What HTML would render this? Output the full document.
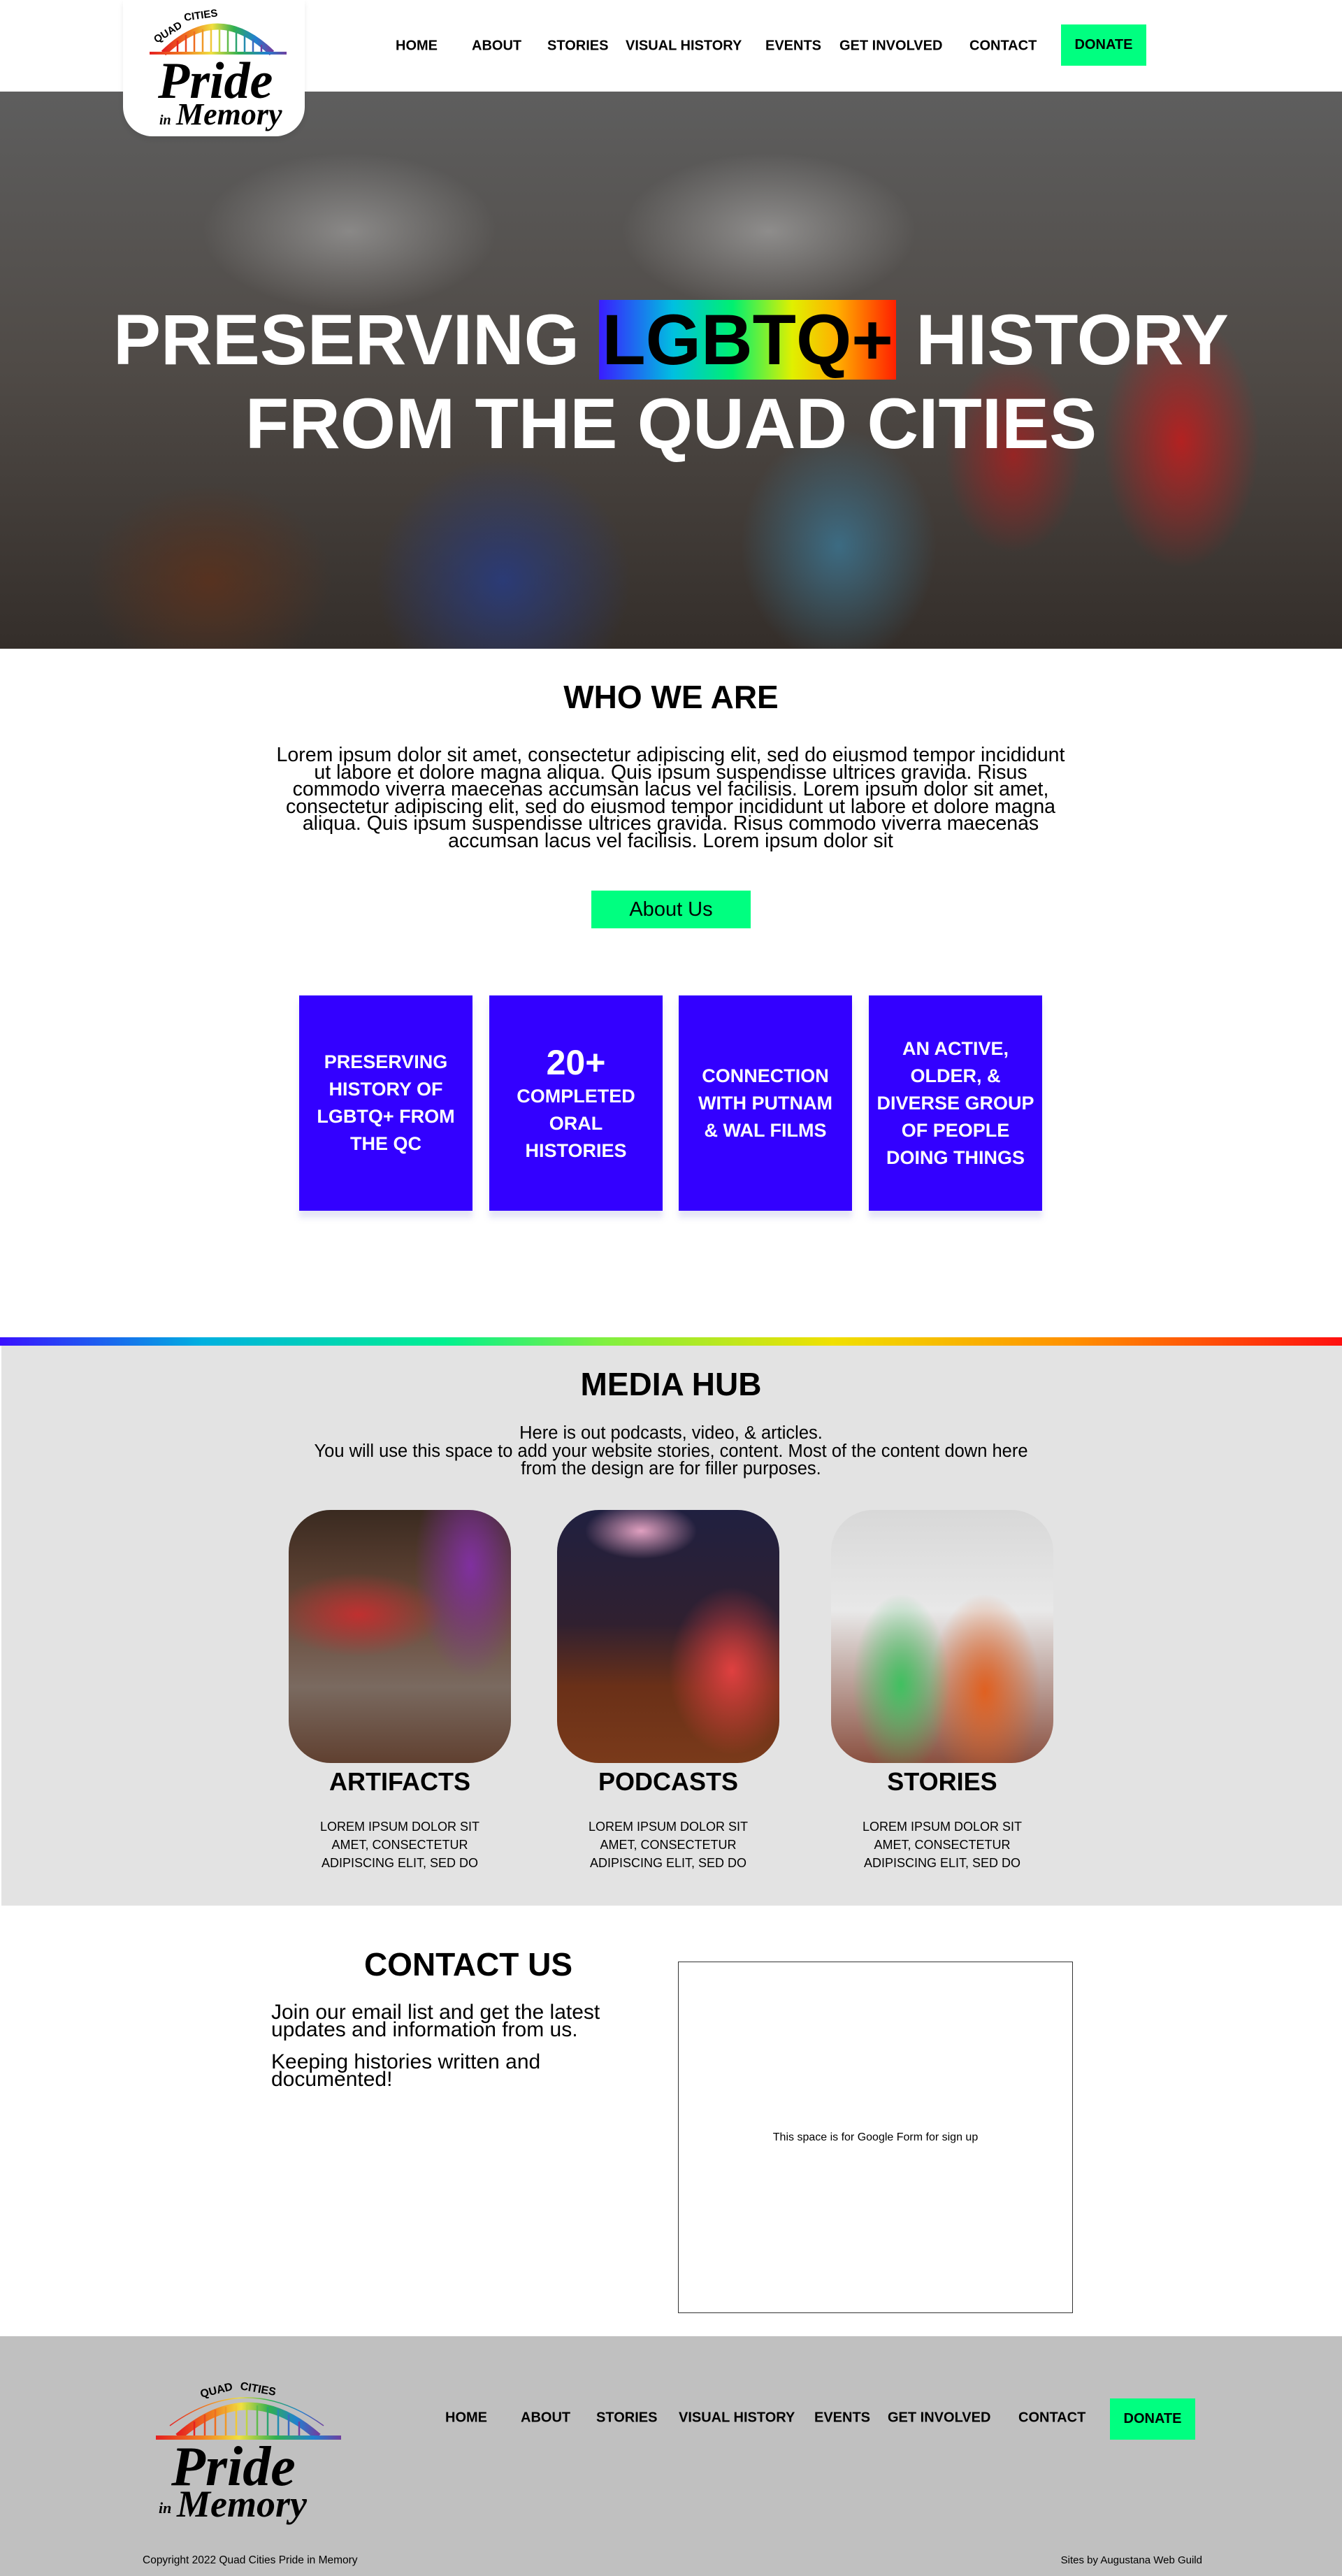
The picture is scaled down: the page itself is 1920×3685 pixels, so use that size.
<!DOCTYPE html>
<html><head><meta charset="utf-8">
<style>
*{margin:0;padding:0;box-sizing:border-box}
body{width:1920px;height:3685px;background:#fff;font-family:"Liberation Sans",sans-serif;color:#000;position:relative;overflow:hidden}
.abs{position:absolute}
.nav a{position:absolute;font-size:20px;font-weight:bold;color:#000;text-decoration:none;white-space:nowrap;transform:translateY(-50%)}
.donate{position:absolute;background:#00ff80;display:flex;align-items:center;justify-content:center;font-size:20px;font-weight:bold}
.hero{top:131px;left:0;width:1920px;height:797px;overflow:hidden;
background:
radial-gradient(ellipse 160px 260px at 1690px 500px,rgba(190,30,30,.9),transparent 70%),
radial-gradient(ellipse 140px 200px at 1450px 520px,rgba(170,30,30,.8),transparent 70%),
radial-gradient(ellipse 200px 240px at 1200px 650px,rgba(60,120,150,.8),transparent 70%),
radial-gradient(ellipse 260px 250px at 720px 700px,rgba(40,60,130,.85),transparent 70%),
radial-gradient(ellipse 250px 200px at 300px 700px,rgba(90,50,30,.9),transparent 70%),
radial-gradient(ellipse 300px 160px at 500px 200px,rgba(200,200,200,.45),transparent 70%),
radial-gradient(ellipse 300px 160px at 1100px 200px,rgba(210,210,210,.45),transparent 70%),
linear-gradient(#5e5e5e,#4f4a46 50%,#342e2a);}
.hero h1{position:absolute;left:0;width:1920px;text-align:center;color:#fff;font-size:102px;font-weight:bold;line-height:120px;letter-spacing:0}
.lg{background:linear-gradient(90deg,#3a1cff,#00c0e0 25%,#00f070 45%,#e0f000 65%,#ffb000 80%,#ff2000);color:#000;padding:0 4px}
h2{position:absolute;left:0;width:1920px;text-align:center;font-weight:bold;font-size:46px}
.card{position:absolute;top:1424px;width:248px;height:308px;background:#3300ff;color:#fff;font-weight:bold;font-size:27px;line-height:39px;display:flex;align-items:center;justify-content:center;text-align:center;box-shadow:0 10px 8px rgba(150,150,220,.25)}
.img{position:absolute;top:2160px;width:318px;height:362px;border-radius:60px;overflow:hidden}
.t3{position:absolute;top:2528px;width:318px;text-align:center;font-size:36px;font-weight:bold}
.c3{position:absolute;top:2600px;width:318px;text-align:center;font-size:18px;line-height:26px}
</style></head><body>

<div class="abs" style="left:176px;top:0;width:260px;height:195px;background:#fff;border-radius:0 0 42px 42px;box-shadow:0 4px 8px rgba(0,0,0,.08);z-index:3">
<svg width="260" height="195" viewBox="0 0 260 195">
<defs><linearGradient id="rb" x1="0" x2="1"><stop offset="0" stop-color="#e52020"/><stop offset=".25" stop-color="#f08020"/><stop offset=".45" stop-color="#f0e040"/><stop offset=".65" stop-color="#30b050"/><stop offset=".85" stop-color="#2080d0"/><stop offset="1" stop-color="#7040a0"/></linearGradient></defs>
<path d="M58 76 Q135 0 213 76" fill="none" stroke="url(#rb)" stroke-width="9"/>
<g stroke="url(#rb)" stroke-width="2.5">
<path d="M78 76V58M90 76V50M102 76V45M114 76V42M126 76V41M138 76V41M150 76V42M162 76V45M174 76V50M186 76V56M198 76V64"/></g>
<rect x="38" y="74" width="196" height="4" fill="url(#rb)"/>
<text x="48" y="62" font-size="15" font-weight="bold" font-family="Liberation Sans" transform="rotate(-32 48 62)">QUAD</text>
<text x="88" y="30" font-size="15" font-weight="bold" font-family="Liberation Sans" transform="rotate(-8 88 30)">CITIES</text>
<text x="50" y="140" font-size="74" font-weight="bold" font-style="italic" font-family="Liberation Serif">Pride</text>
<text x="52" y="178" font-size="20" font-weight="bold" font-style="italic" font-family="Liberation Serif">in</text>
<text x="76" y="178" font-size="44" font-weight="bold" font-style="italic" font-family="Liberation Serif">Memory</text>
</svg></div>

<div class="nav">
<a style="left:566px;top:66px">HOME</a>
<a style="left:675px;top:66px">ABOUT</a>
<a style="left:783px;top:66px">STORIES</a>
<a style="left:895px;top:66px">VISUAL HISTORY</a>
<a style="left:1095px;top:66px">EVENTS</a>
<a style="left:1201px;top:66px">GET INVOLVED</a>
<a style="left:1387px;top:66px">CONTACT</a>
</div>
<div class="donate" style="left:1518px;top:35px;width:122px;height:59px">DONATE</div>

<div class="abs hero">
<h1 style="top:295px">PRESERVING <span class="lg">LGBTQ+</span> HISTORY</h1>
<h1 style="top:415px">FROM THE QUAD CITIES</h1>
</div>

<h2 style="top:970px">WHO WE ARE</h2>
<p class="abs" style="left:392px;top:1068px;width:1135px;text-align:center;font-size:28.5px;line-height:24.5px">Lorem ipsum dolor sit amet, consectetur adipiscing elit, sed do eiusmod tempor incididunt ut labore et dolore magna aliqua. Quis ipsum suspendisse ultrices gravida. Risus commodo viverra maecenas accumsan lacus vel facilisis. Lorem ipsum dolor sit amet, consectetur adipiscing elit, sed do eiusmod tempor incididunt ut labore et dolore magna aliqua. Quis ipsum suspendisse ultrices gravida. Risus commodo viverra maecenas accumsan lacus vel facilisis. Lorem ipsum dolor sit</p>
<div class="donate" style="left:846px;top:1274px;width:228px;height:54px;font-size:29px;font-weight:normal">About Us</div>

<div class="card" style="left:428px">PRESERVING<br>HISTORY OF<br>LGBTQ+ FROM<br>THE QC</div>
<div class="card" style="left:700px"><div><span style="font-size:50px;line-height:58px">20+</span><br>COMPLETED<br>ORAL<br>HISTORIES</div></div>
<div class="card" style="left:971px">CONNECTION<br>WITH PUTNAM<br>&amp; WAL FILMS</div>
<div class="card" style="left:1243px">AN ACTIVE,<br>OLDER, &amp;<br>DIVERSE GROUP<br>OF PEOPLE<br>DOING THINGS</div>

<div class="abs" style="left:0;top:1913px;width:1920px;height:12px;background:linear-gradient(90deg,#3a10ff,#00b0e0 15%,#00f090 33%,#80f040 45%,#f0e000 62%,#ff9000 80%,#ff1010)"></div>
<div class="abs" style="left:2px;top:1925px;width:1918px;height:801px;background:#e3e3e3"></div>
<h2 style="top:1953px">MEDIA HUB</h2>
<p class="abs" style="left:0;top:2038px;width:1920px;text-align:center;font-size:25.5px;line-height:25.5px">Here is out podcasts, video, &amp; articles.<br>You will use this space to add your website stories, content. Most of the content down here<br>from the design are for filler purposes.</p>

<div class="img" style="left:413px;background:radial-gradient(ellipse 120px 60px at 100px 150px,#c03030,transparent),radial-gradient(ellipse 80px 160px at 260px 80px,#8030a0,transparent),linear-gradient(#3a2a20,#6a4a3a 40%,#7a6a60 70%,#604030)"></div>
<div class="img" style="left:797px;background:radial-gradient(ellipse 90px 120px at 250px 230px,#e04040,transparent),radial-gradient(ellipse 80px 40px at 120px 30px,#e0a0c0,transparent),linear-gradient(#202040,#302030 45%,#6a3018 70%,#7a3a1a)"></div>
<div class="img" style="left:1189px;background:radial-gradient(ellipse 70px 130px at 100px 250px,#40c060,transparent),radial-gradient(ellipse 80px 140px at 220px 260px,#e06020,transparent),linear-gradient(#d8d8d8,#e8e8e8 40%,#8a5040)"></div>

<div class="t3" style="left:413px">ARTIFACTS</div>
<div class="t3" style="left:797px">PODCASTS</div>
<div class="t3" style="left:1189px">STORIES</div>
<div class="c3" style="left:413px">LOREM IPSUM DOLOR SIT<br>AMET, CONSECTETUR<br>ADIPISCING ELIT, SED DO</div>
<div class="c3" style="left:797px">LOREM IPSUM DOLOR SIT<br>AMET, CONSECTETUR<br>ADIPISCING ELIT, SED DO</div>
<div class="c3" style="left:1189px">LOREM IPSUM DOLOR SIT<br>AMET, CONSECTETUR<br>ADIPISCING ELIT, SED DO</div>

<div class="abs" style="left:470px;top:2783px;width:400px;text-align:center;font-size:46px;font-weight:bold">CONTACT US</div>
<p class="abs" style="left:388px;top:2866px;width:520px;font-size:30px;line-height:25px">Join our email list and get the latest updates and information from us.</p>
<p class="abs" style="left:388px;top:2937px;width:450px;font-size:30px;line-height:25px">Keeping histories written and documented!</p>
<div class="abs" style="left:970px;top:2806px;width:565px;height:503px;border:1.5px solid #333;display:flex;align-items:center;justify-content:center;font-size:16px">This space is for Google Form for sign up</div>

<div class="abs" style="left:0;top:3342px;width:1920px;height:343px;background:#c0c0c0"></div>
<div class="abs" style="left:223px;top:3400px">
<svg width="265" height="215" viewBox="0 0 265 215">
<path d="M20 70 Q130 -10 240 70" fill="none" stroke="url(#rb)" stroke-width="1.5"/>
<path d="M32 86 Q132 -2 232 86" fill="none" stroke="url(#rb)" stroke-width="11"/>
<g stroke="url(#rb)" stroke-width="2.5"><path d="M55 86V64M70 86V54M85 86V47M100 86V43M115 86V41M130 86V40M145 86V41M160 86V43M175 86V47M190 86V54M205 86V64"/></g>
<rect x="0" y="84" width="265" height="6" fill="url(#rb)"/>
<text x="65" y="30" font-size="16" font-weight="bold" font-family="Liberation Sans" transform="rotate(-14 65 30)">QUAD</text>
<text x="120" y="18" font-size="16" font-weight="bold" font-family="Liberation Sans" transform="rotate(10 120 18)">CITIES</text>
<text x="22" y="155" font-size="80" font-weight="bold" font-style="italic" font-family="Liberation Serif">Pride</text>
<text x="4" y="195" font-size="22" font-weight="bold" font-style="italic" font-family="Liberation Serif">in</text>
<text x="30" y="200" font-size="54" font-weight="bold" font-style="italic" font-family="Liberation Serif">Memory</text>
</svg></div>
<div class="nav">
<a style="left:637px;top:3459px">HOME</a>
<a style="left:745px;top:3459px">ABOUT</a>
<a style="left:853px;top:3459px">STORIES</a>
<a style="left:971px;top:3459px">VISUAL HISTORY</a>
<a style="left:1165px;top:3459px">EVENTS</a>
<a style="left:1270px;top:3459px">GET INVOLVED</a>
<a style="left:1457px;top:3459px">CONTACT</a>
</div>
<div class="donate" style="left:1588px;top:3431px;width:122px;height:59px">DONATE</div>
<div class="abs" style="left:204px;top:3654px;font-size:15.5px">Copyright 2022 Quad Cities Pride in Memory</div>
<div class="abs" style="left:1420px;top:3654px;width:300px;text-align:right;font-size:15px">Sites by Augustana Web Guild</div>
</body></html>
